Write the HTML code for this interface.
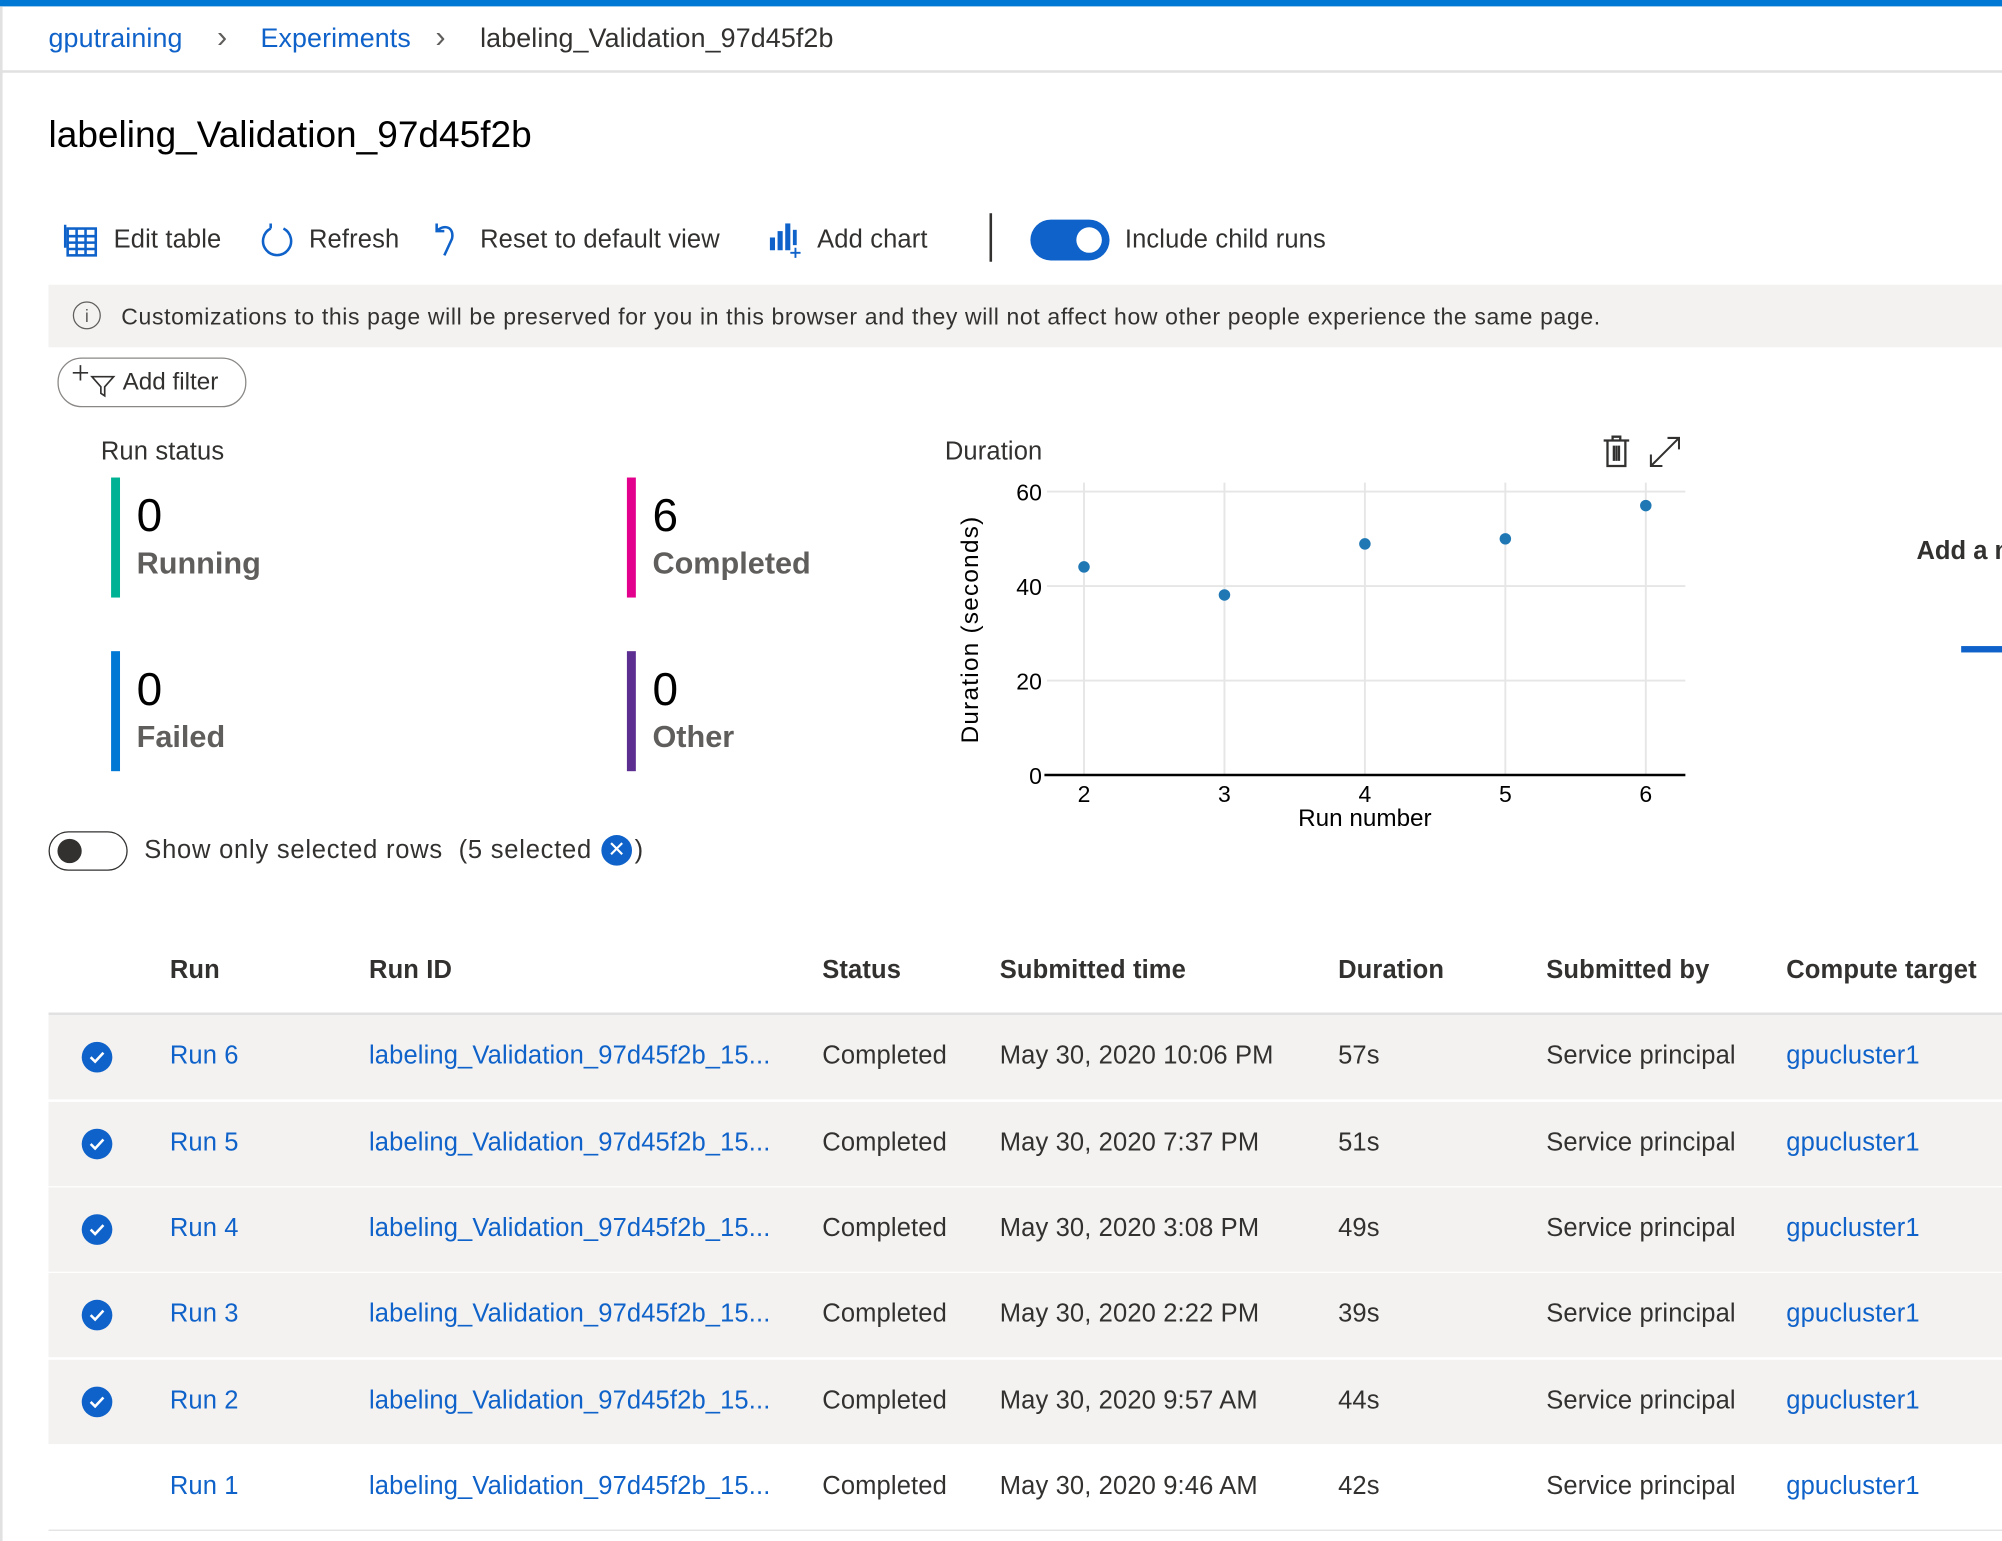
<!DOCTYPE html>
<html><head><meta charset="utf-8">
<style>
html,body{margin:0;padding:0;background:#fff;overflow:hidden;width:2002px;height:1541px}
#w{position:absolute;left:0;top:0;width:1568px;height:1207px;transform:scale(1.2768);transform-origin:0 0;font-family:"Liberation Sans",sans-serif;color:#323130}
.a{position:absolute;white-space:nowrap}
.t{font-size:20px;letter-spacing:0.1px}
.l{color:#0f62c9}
.b{font-weight:bold}
.row{position:absolute;left:38px;width:1530px;height:66px}
.cell{position:absolute;top:21px;font-size:20px;letter-spacing:0.1px;white-space:nowrap}
.chk{position:absolute;left:26px;top:21px;width:24px;height:24px;border-radius:50%;background:#0f62c9}
</style></head><body><div id="w">
<div class="a" style="left:0;top:0;width:1568px;height:5px;background:#0078d4"></div>
<div class="a" style="left:0;top:5px;width:2px;height:1202px;background:#e1e1e1"></div>
<div class="a" style="left:0;top:55px;width:1568px;height:2px;background:#e1e1e1"></div>
<div class="a t l" style="left:38px;top:19px;font-size:21px">gputraining</div>
<div class="a" style="left:170px;top:16px;font-size:24px;color:#605e5c">›</div>
<div class="a t l" style="left:204px;top:19px;font-size:21px">Experiments</div>
<div class="a" style="left:341px;top:16px;font-size:24px;color:#605e5c">›</div>
<div class="a t" style="left:376px;top:19px;font-size:21px">labeling_Validation_97d45f2b</div>
<div class="a" style="left:38px;top:90px;font-size:29px;color:#000">labeling_Validation_97d45f2b</div>

<svg class="a" style="left:50px;top:174px" width="28" height="28" viewBox="0 0 28 28" fill="none" stroke="#0f62c9" stroke-width="2"><rect x="3" y="5" width="22" height="21"/><path d="M3 11h22M3 16h22M3 21h22M10 5v21M17 5v21M1 2v18"/></svg>
<div class="a t" style="left:89px;top:177px">Edit table</div>
<svg class="a" style="left:203px;top:174px" width="28" height="30" viewBox="0 0 28 30" fill="none" stroke="#0f62c9" stroke-width="2"><path d="M9 5A11 11 0 1 0 19 5M9 5V1"/></svg>
<div class="a t" style="left:242px;top:177px">Refresh</div>
<svg class="a" style="left:338px;top:172px" width="26" height="32" viewBox="0 0 26 32" fill="none" stroke="#0f62c9" stroke-width="2"><path d="M4 3v6h6M4 9c6-6 14-3 12 6l-6 13"/></svg>
<div class="a t" style="left:376px;top:177px">Reset to default view</div>
<svg class="a" style="left:601px;top:172px" width="28" height="32" viewBox="0 0 28 32"><rect x="2" y="14" width="4" height="10" fill="#0f62c9"/><rect x="8" y="9" width="4" height="15" fill="#0f62c9"/><rect x="14" y="3" width="4" height="21" fill="#0f62c9"/><rect x="20" y="8" width="3" height="12" fill="#0f62c9"/><path d="M22 22v8M18 26h8" stroke="#0f62c9" stroke-width="1.5"/></svg>
<div class="a t" style="left:640px;top:177px">Add chart</div>
<div class="a" style="left:775px;top:167px;width:2px;height:38px;background:#323130"></div>
<div class="a" style="left:807px;top:172px;width:62px;height:32px;border-radius:16px;background:#0f62c9"></div>
<div class="a" style="left:843px;top:178px;width:20px;height:20px;border-radius:50%;background:#fff"></div>
<div class="a t" style="left:881px;top:177px">Include child runs</div>

<div class="a" style="left:38px;top:223px;width:1530px;height:49px;background:#f3f2f1"></div>
<div class="a" style="left:57px;top:236px;width:20px;height:20px;border:1.5px solid #605e5c;border-radius:50%;font-size:14px;text-align:center;line-height:20px;color:#605e5c">i</div>
<div class="a" style="left:95px;top:238px;font-size:18px;letter-spacing:0.5px;color:#323130">Customizations to this page will be preserved for you in this browser and they will not affect how other people experience the same page.</div>

<div class="a" style="left:45px;top:280px;width:146px;height:37px;border:1.5px solid #8a8886;border-radius:19px"></div>
<svg class="a" style="left:56px;top:284px" width="36" height="28" viewBox="0 0 36 28" fill="none" stroke="#323130" stroke-width="1.3"><path d="M7 2v12M1 8h12M16 11h17l-7 8v7l-3-2v-5z"/></svg>
<div class="a" style="left:96px;top:289px;font-size:19px">Add filter</div>

<div class="a t" style="left:79px;top:343px">Run status</div>
<div class="a" style="left:87px;top:374px;width:7px;height:94px;background:#00b294"></div>
<div class="a" style="left:107px;top:383px;font-size:36px;color:#000">0</div>
<div class="a" style="left:107px;top:428px;font-size:24px;color:#605e5c;font-weight:bold">Running</div>
<div class="a" style="left:491px;top:374px;width:7px;height:94px;background:#e3008c"></div>
<div class="a" style="left:511px;top:383px;font-size:36px;color:#000">6</div>
<div class="a" style="left:511px;top:428px;font-size:24px;color:#605e5c;font-weight:bold">Completed</div>
<div class="a" style="left:87px;top:510px;width:7px;height:94px;background:#0078d4"></div>
<div class="a" style="left:107px;top:519px;font-size:36px;color:#000">0</div>
<div class="a" style="left:107px;top:564px;font-size:24px;color:#605e5c;font-weight:bold">Failed</div>
<div class="a" style="left:491px;top:510px;width:7px;height:94px;background:#5c2e91"></div>
<div class="a" style="left:511px;top:519px;font-size:36px;color:#000">0</div>
<div class="a" style="left:511px;top:564px;font-size:24px;color:#605e5c;font-weight:bold">Other</div>

<div class="a t" style="left:740px;top:343px">Duration</div>
<svg class="a" style="left:1254px;top:340px" width="24" height="28" viewBox="0 0 24 28" fill="none" stroke="#323130" stroke-width="1.8"><path d="M2 5h20M9 5V2h6v3M5 5v20h14V5M10 9v12M12 9v12M14 9v12"/></svg>
<svg class="a" style="left:1290px;top:340px" width="28" height="28" viewBox="0 0 28 28" fill="none" stroke="#323130" stroke-width="1.6"><path d="M3 25L25 3M16 3h9v9M3 16v9h9"/></svg>
<svg class="a" style="left:740px;top:370px" width="600" height="290" viewBox="740 370 600 290" font-family="Liberation Sans,sans-serif" font-size="18" fill="#000">
<g stroke="#e6e6e6" stroke-width="1.5"><path d="M820 385H1320M820 459H1320M820 533H1320M849 378V607M959 378V607M1069 378V607M1179 378V607M1289 378V607"/></g>
<path d="M818 607H1320" stroke="#000" stroke-width="2"/>
<g text-anchor="end"><text x="816" y="392">60</text><text x="816" y="466">40</text><text x="816" y="540">20</text><text x="816" y="614">0</text></g>
<g text-anchor="middle"><text x="849" y="628">2</text><text x="959" y="628">3</text><text x="1069" y="628">4</text><text x="1179" y="628">5</text><text x="1289" y="628">6</text><text x="1069" y="647" font-size="19">Run number</text></g>
<text transform="translate(766 493) rotate(-90)" text-anchor="middle" font-size="19" letter-spacing="1">Duration (seconds)</text>
<g fill="#1f77b4"><circle cx="849" cy="444" r="4.5"/><circle cx="959" cy="466" r="4.5"/><circle cx="1069" cy="426" r="4.5"/><circle cx="1179" cy="422" r="4.5"/><circle cx="1289" cy="396" r="4.5"/></g>
</svg>
<div class="a b" style="left:1501px;top:421px;font-size:20px">Add a m</div>
<div class="a" style="left:1536px;top:506px;width:32px;height:5px;background:#0f62c9"></div>

<div class="a" style="left:38px;top:651px;width:60px;height:29px;border:1.5px solid #323130;border-radius:16px"></div>
<div class="a" style="left:45px;top:657px;width:19px;height:19px;border-radius:50%;background:#323130"></div>
<div class="a" style="left:113px;top:655px;font-size:20px;letter-spacing:0.6px">Show only selected rows&nbsp; (5 selected</div>
<div class="a" style="left:471px;top:654px;width:24px;height:24px;border-radius:50%;background:#0f62c9;color:#fff;text-align:center;font-size:17px;line-height:23px">✕</div>
<div class="a t" style="left:497px;top:655px">)</div>

<div class="a t b" style="left:133px;top:749px">Run</div>
<div class="a t b" style="left:289px;top:749px">Run ID</div>
<div class="a t b" style="left:644px;top:749px">Status</div>
<div class="a t b" style="left:783px;top:749px">Submitted time</div>
<div class="a t b" style="left:1048px;top:749px">Duration</div>
<div class="a t b" style="left:1211px;top:749px">Submitted by</div>
<div class="a t b" style="left:1399px;top:749px">Compute target</div>
<div class="a" style="left:38px;top:793px;width:1530px;height:2px;background:#e1e1e1"></div>

<div class="row" style="top:795px;background:#f3f2f1"><div class="chk"></div><svg class="a" style="left:32px;top:28px" width="12" height="10"><path d="M1 5l3.5 3.5L11 1.5" stroke="#fff" stroke-width="2" fill="none"/></svg><div class="cell l" style="left:95px">Run 6</div><div class="cell l" style="left:251px">labeling_Validation_97d45f2b_15...</div><div class="cell" style="left:606px">Completed</div><div class="cell" style="left:745px">May 30, 2020 10:06 PM</div><div class="cell" style="left:1010px">57s</div><div class="cell" style="left:1173px">Service principal</div><div class="cell l" style="left:1361px">gpucluster1</div></div>
<div class="row" style="top:863px;background:#f3f2f1"><div class="chk"></div><svg class="a" style="left:32px;top:28px" width="12" height="10"><path d="M1 5l3.5 3.5L11 1.5" stroke="#fff" stroke-width="2" fill="none"/></svg><div class="cell l" style="left:95px">Run 5</div><div class="cell l" style="left:251px">labeling_Validation_97d45f2b_15...</div><div class="cell" style="left:606px">Completed</div><div class="cell" style="left:745px">May 30, 2020 7:37 PM</div><div class="cell" style="left:1010px">51s</div><div class="cell" style="left:1173px">Service principal</div><div class="cell l" style="left:1361px">gpucluster1</div></div>
<div class="row" style="top:930px;background:#f3f2f1"><div class="chk"></div><svg class="a" style="left:32px;top:28px" width="12" height="10"><path d="M1 5l3.5 3.5L11 1.5" stroke="#fff" stroke-width="2" fill="none"/></svg><div class="cell l" style="left:95px">Run 4</div><div class="cell l" style="left:251px">labeling_Validation_97d45f2b_15...</div><div class="cell" style="left:606px">Completed</div><div class="cell" style="left:745px">May 30, 2020 3:08 PM</div><div class="cell" style="left:1010px">49s</div><div class="cell" style="left:1173px">Service principal</div><div class="cell l" style="left:1361px">gpucluster1</div></div>
<div class="row" style="top:997px;background:#f3f2f1"><div class="chk"></div><svg class="a" style="left:32px;top:28px" width="12" height="10"><path d="M1 5l3.5 3.5L11 1.5" stroke="#fff" stroke-width="2" fill="none"/></svg><div class="cell l" style="left:95px">Run 3</div><div class="cell l" style="left:251px">labeling_Validation_97d45f2b_15...</div><div class="cell" style="left:606px">Completed</div><div class="cell" style="left:745px">May 30, 2020 2:22 PM</div><div class="cell" style="left:1010px">39s</div><div class="cell" style="left:1173px">Service principal</div><div class="cell l" style="left:1361px">gpucluster1</div></div>
<div class="row" style="top:1065px;background:#f3f2f1"><div class="chk"></div><svg class="a" style="left:32px;top:28px" width="12" height="10"><path d="M1 5l3.5 3.5L11 1.5" stroke="#fff" stroke-width="2" fill="none"/></svg><div class="cell l" style="left:95px">Run 2</div><div class="cell l" style="left:251px">labeling_Validation_97d45f2b_15...</div><div class="cell" style="left:606px">Completed</div><div class="cell" style="left:745px">May 30, 2020 9:57 AM</div><div class="cell" style="left:1010px">44s</div><div class="cell" style="left:1173px">Service principal</div><div class="cell l" style="left:1361px">gpucluster1</div></div>
<div class="row" style="top:1132px;background:#fff"><div class="cell l" style="left:95px">Run 1</div><div class="cell l" style="left:251px">labeling_Validation_97d45f2b_15...</div><div class="cell" style="left:606px">Completed</div><div class="cell" style="left:745px">May 30, 2020 9:46 AM</div><div class="cell" style="left:1010px">42s</div><div class="cell" style="left:1173px">Service principal</div><div class="cell l" style="left:1361px">gpucluster1</div></div>
<div class="a" style="left:38px;top:1198px;width:1530px;height:1px;background:#e1e1e1"></div>
</div></body></html>
